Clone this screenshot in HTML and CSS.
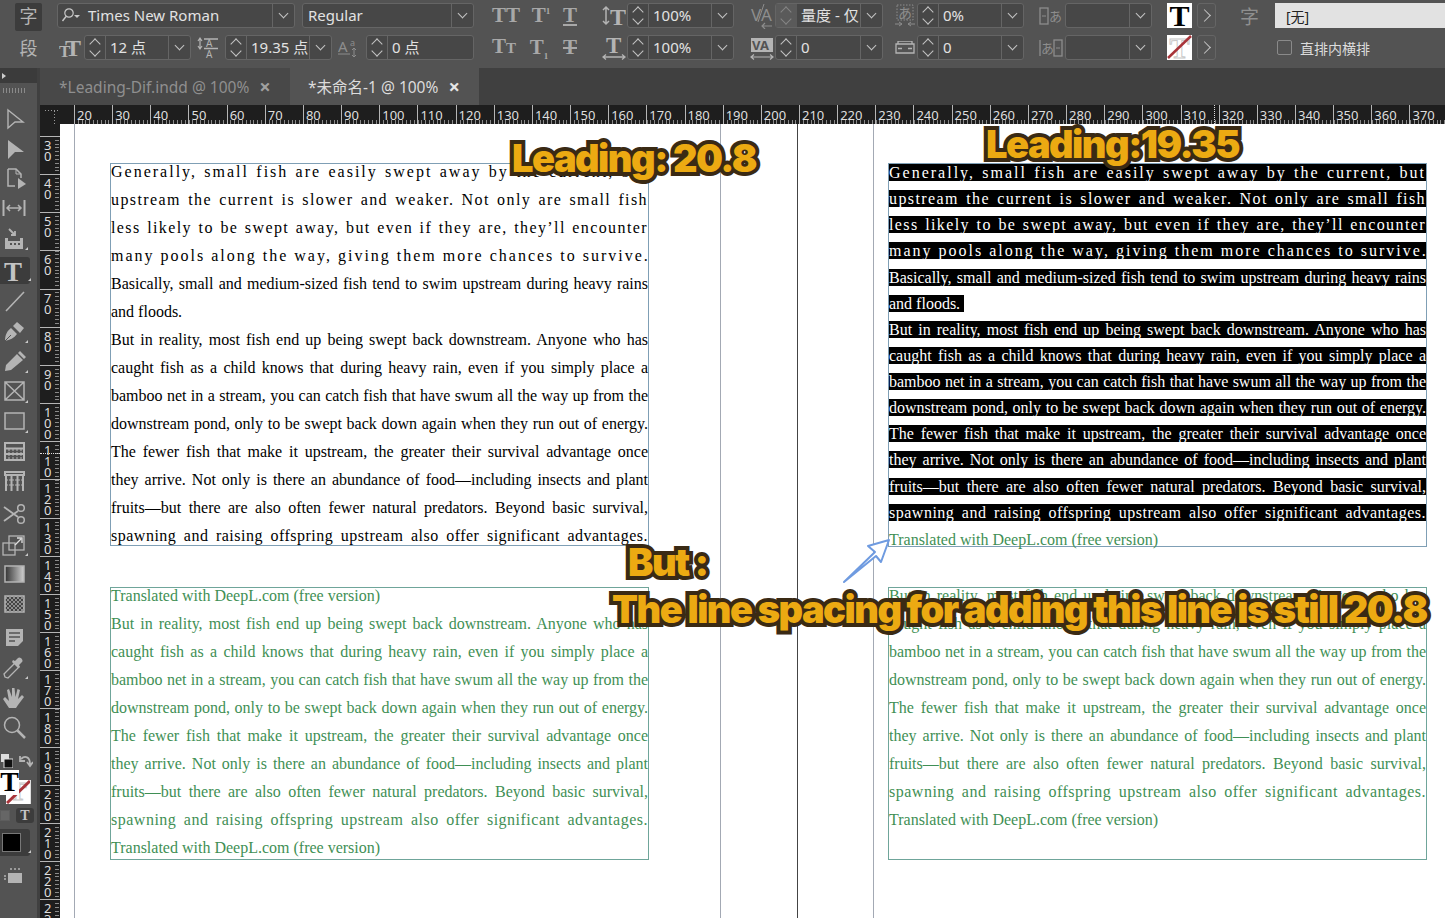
FILE: index.html
```html
<!DOCTYPE html>
<html lang="en">
<head>
  <meta charset="UTF-8" />
  <title>Leading test</title>
  <link rel="stylesheet" href="styles.css">
</head>
<body>
  <!-- Character control bar -->
  <div class="control-bar">
    <div class="col col-tabs">
      <div class="mode-tab active">字</div>
      <div class="mode-tab">段</div>
    </div>

    <div class="col col-font">
      <div class="row">
        <div class="field font-name">
          <svg class="search" width="22" height="16" viewBox="0 0 22 16"><circle cx="8" cy="6" r="4.2" fill="none" stroke="#c8c8c8" stroke-width="1.2"/><path d="M5 9.5L1.5 14" stroke="#c8c8c8" stroke-width="1.4"/><path d="M13 8h6l-3 3z" fill="#c8c8c8"/></svg>
          <span class="val">Times New Roman</span><span class="drop"></span>
        </div>
        <div class="field font-style"><span class="val">Regular</span><span class="drop"></span></div>
      </div>
      <div class="row">
        <div class="ctl-icon w27"><svg width="24" height="22" viewBox="0 0 24 22"><text x="0" y="20" class="ic-text" font-size="17">T</text><text x="6" y="19" class="ic-text" font-size="24">T</text></svg></div>
        <div class="field num"><span class="spin"></span><span class="val">12 点</span><span class="drop"></span></div>
        <div class="ctl-icon w34"><svg width="22" height="24" viewBox="0 0 22 24"><path d="M3 3v9M1 5l2-3 2 3M1 10l2 3 2-3" fill="none" stroke="#b4b4b4" stroke-width="1.2"/><path d="M7 3h14M7 12.500h14" stroke="#b4b4b4" stroke-width="1.5"/><text x="9" y="11" class="ic-text thin" font-size="10">A</text><text x="9" y="22" class="ic-text thin" font-size="10">A</text></svg></div>
        <div class="field num"><span class="spin"></span><span class="val clip">19.35 点</span><span class="drop"></span></div>
        <div class="ctl-icon w34 dim"><svg width="22" height="22" viewBox="0 0 22 22"><text x="0" y="15" class="ic-text thin" font-size="15">A</text><text x="12" y="9" class="ic-text thin" font-size="9">a</text><path d="M0 17h12" stroke="#8d8d8d"/><path d="M16 11v9M14 13l2-2 2 2M14 18l2 2 2-2" fill="none" stroke="#8d8d8d"/></svg></div>
        <div class="field num last"><span class="spin"></span><span class="val">0 点</span></div>
      </div>
    </div>

    <div class="col col-caps">
      <div class="row spread">
        <span class="glyph">TT</span><span class="glyph">T<sup>1</sup></span><span class="glyph under">T</span>
      </div>
      <div class="row spread">
        <span class="glyph">T<small>T</small></span><span class="glyph">T<sub>1</sub></span><span class="glyph strike">T</span>
      </div>
    </div>

    <div class="col col-scale">
      <div class="row">
        <div class="ctl-icon w26"><svg width="24" height="24" viewBox="0 0 24 24"><path d="M4 3v17M1 6l3-3 3 3M1 17l3 3 3-3" fill="none" stroke="#b4b4b4" stroke-width="1.5"/><text x="8" y="21" class="ic-text" font-size="24">T</text></svg></div>
        <div class="field num"><span class="spin"></span><span class="val">100%</span><span class="drop"></span></div>
      </div>
      <div class="row">
        <div class="ctl-icon w26"><svg width="24" height="24" viewBox="0 0 24 24"><text x="4" y="17" class="ic-text" font-size="23">T</text><path d="M1 21h22M4 18.500l-3 2.500 3 2.500M20 18.500l3 2.500-3 2.500" fill="none" stroke="#b4b4b4" stroke-width="1.3"/></svg></div>
        <div class="field num"><span class="spin"></span><span class="val">100%</span><span class="drop"></span></div>
      </div>
    </div>

    <div class="col col-kern">
      <div class="row">
        <div class="ctl-icon w26 dim"><svg width="24" height="26" viewBox="0 0 24 26"><text x="1" y="18" class="ic-text thin" font-size="17">V</text><text x="11" y="18" class="ic-text thin" font-size="17">A</text><path d="M14 1L8 19" stroke="#8d8d8d"/><path d="M22 23H12M15 20l-3 3 3 3" fill="none" stroke="#8d8d8d" stroke-width="1.2"/></svg></div>
        <div class="field num wide"><span class="spin off"></span><span class="val clip">量度 - 仅</span><span class="drop"></span></div>
      </div>
      <div class="row">
        <div class="ctl-icon w26"><svg width="24" height="24" viewBox="0 0 24 24"><rect x="1" y="2" width="22" height="14" fill="#b4b4b4"/><text x="2" y="14" class="vatext" font-size="13">VA</text><path d="M1 21h22M4 18.500l-3 2.500 3 2.500M20 18.500l3 2.500-3 2.500" fill="none" stroke="#b4b4b4" stroke-width="1.2"/></svg></div>
        <div class="field num wide"><span class="spin"></span><span class="val">0</span><span class="drop"></span></div>
      </div>
    </div>

    <div class="col col-tsume">
      <div class="row">
        <div class="ctl-icon w25 dim"><svg width="22" height="24" viewBox="0 0 22 24"><rect x="3" y="1" width="16" height="15" fill="none" stroke="#8d8d8d" stroke-dasharray="1.500 1.500"/><text x="4" y="14" class="ic-cjk" font-size="14">あ</text><path d="M1 20h7M5 18l3 2-3 2M21 20h-7M17 18l-3 2 3 2" fill="none" stroke="#8d8d8d"/></svg></div>
        <div class="field num"><span class="spin"></span><span class="val">0%</span><span class="drop"></span></div>
      </div>
      <div class="row">
        <div class="ctl-icon w25"><svg width="20" height="14" viewBox="0 0 20 14"><path d="M1 3h18v9H1zM3 3V0h14v3M3 7.500h4M13 7.500h4" fill="none" stroke="#b4b4b4" stroke-width="1.3"/></svg></div>
        <div class="field num"><span class="spin"></span><span class="val">0</span><span class="drop"></span></div>
      </div>
    </div>

    <div class="col col-aki">
      <div class="row">
        <div class="ctl-icon w28 dim"><svg width="24" height="20" viewBox="0 0 24 20"><rect x="1" y="2" width="8" height="16" fill="none" stroke="#8d8d8d" stroke-width="1.300"/><path d="M3 10h4" stroke="#8d8d8d"/><text x="10" y="15" class="ic-cjk" font-size="13">あ</text></svg></div>
        <div class="field blank"><span class="val"></span><span class="drop"></span></div>
      </div>
      <div class="row">
        <div class="ctl-icon w28 dim"><svg width="24" height="20" viewBox="0 0 24 20"><path d="M1 2v16" stroke="#8d8d8d" stroke-width="1.300"/><text x="2" y="15" class="ic-cjk" font-size="13">あ</text><rect x="15" y="2" width="8" height="16" fill="none" stroke="#8d8d8d" stroke-width="1.300"/><path d="M17 10h4" stroke="#8d8d8d"/></svg></div>
        <div class="field blank"><span class="val"></span><span class="drop"></span></div>
      </div>
    </div>

    <div class="col col-swatch">
      <div class="row">
        <div class="swatch fill-t">T</div>
        <div class="next"></div>
      </div>
      <div class="row">
        <div class="swatch none-t">T<svg class="slash" width="25" height="24" viewBox="0 0 25 24"><path d="M1 23L24 1" stroke="#a8343a" stroke-width="2.500"/></svg></div>
        <div class="next"></div>
      </div>
    </div>

    <div class="col col-style">
      <div class="row">
        <div class="ctl-icon style-mark">字</div>
        <div class="style-field">[无]</div>
      </div>
      <div class="row tate">
        <span class="check"></span><span>直排内横排</span>
      </div>
    </div>
  </div>

  <!-- Document tabs -->
  <div class="tab-bar">
    <div class="panel-head"><span class="panel-arrow"></span></div>
    <div class="doc-tab">*Leading-Dif.indd @ 100%<span class="close">×</span></div>
    <div class="doc-tab current">*未命名-1 @ 100%<span class="close">×</span></div>
  </div>

  <div class="workspace">
    <!-- Tools -->
    <div class="tools">
      <div class="tool"><svg width="24" height="26" viewBox="0 0 24 26"><path d="M6 5l15 12h-8l-7 6z" fill="none" stroke="#b4b4b4" stroke-width="1.4"/></svg></div>
      <div class="tool"><svg width="24" height="26" viewBox="0 0 24 26"><path d="M6 5l16 12h-9l-7 7z" fill="#b4b4b4"/></svg></div>
      <div class="tool"><svg width="24" height="26" viewBox="0 0 24 26"><path d="M6 4h8l5 5v4M6 4v17h7" fill="none" stroke="#b4b4b4" stroke-width="1.500"/><path d="M14 4v5h5" fill="none" stroke="#b4b4b4"/><path d="M16 13l8 6-8 5z" fill="#b4b4b4"/></svg></div>
      <div class="tool"><svg width="26" height="26" viewBox="0 0 26 26"><path d="M2.500 5v16M23.500 5v16" stroke="#b4b4b4" stroke-width="2"/><path d="M6 13h14M9 10l-3 3 3 3M17 10l3 3-3 3" fill="none" stroke="#b4b4b4" stroke-width="1.500"/></svg></div>
      <div class="tool more"><svg width="26" height="26" viewBox="0 0 26 26"><path d="M4 13v11h18V13h-3v3H7v-3z" fill="#b4b4b4"/><path d="M8 4l6 6M14 6v4h-4" fill="none" stroke="#b4b4b4" stroke-width="1.800"/><path d="M9 19h2M13 19h2M17 19h2" stroke="#535353" stroke-width="2"/></svg></div>
      <div class="tool gap active more"><svg width="26" height="26" viewBox="0 0 26 26"><text x="3" y="23" class="tool-t" font-size="27">T</text></svg></div>
      <div class="tool"><svg width="24" height="26" viewBox="0 0 24 26"><path d="M4 23L22 4" stroke="#b4b4b4" stroke-width="1.600"/></svg></div>
      <div class="tool more"><svg width="24" height="26" viewBox="0 0 24 26"><path d="M3 23c0-6 2-10 6-13l6 6c-3 4-7 6-12 7zM11 8l4-4 7 6-4 5z" fill="#b4b4b4"/><path d="M3 23l6-6" stroke="#535353"/></svg></div>
      <div class="tool more"><svg width="24" height="26" viewBox="0 0 24 26"><path d="M3 23l1-6L15 6l6 6L9 22zM16 5l2-2 6 6-2 2z" fill="#b4b4b4"/></svg></div>
      <div class="tool more"><svg width="26" height="26" viewBox="0 0 26 26"><path d="M4 4h19v18H4zM4 4l19 18M23 4L4 22" fill="none" stroke="#b4b4b4" stroke-width="1.500"/></svg></div>
      <div class="tool more"><svg width="26" height="26" viewBox="0 0 26 26"><rect x="4" y="5" width="19" height="16" fill="#5c5c5c" stroke="#b4b4b4" stroke-width="1.500"/></svg></div>
      <div class="tool"><svg width="26" height="26" viewBox="0 0 26 26"><path d="M4 5h19v17H4zM4 10.500h19M4 16h19" fill="none" stroke="#b4b4b4" stroke-width="2"/><path d="M8 11v5M12 11v5M16 11v5M20 11v5M8 16v5M12 16v5M16 16v5M20 16v5" stroke="#b4b4b4" stroke-dasharray="2 1"/></svg></div>
      <div class="tool"><svg width="26" height="26" viewBox="0 0 26 26"><path d="M4 4h19v3H4zM5 7v16M22 7v16M10.500 7v16M16.500 7v16" fill="none" stroke="#b4b4b4" stroke-width="2"/><path d="M5 12h17M5 17h17" stroke="#b4b4b4" stroke-dasharray="2 1"/></svg></div>
      <div class="tool gap"><svg width="26" height="26" viewBox="0 0 26 26"><circle cx="20" cy="7" r="3.300" fill="none" stroke="#b4b4b4" stroke-width="1.500"/><circle cx="20" cy="19" r="3.300" fill="none" stroke="#b4b4b4" stroke-width="1.500"/><path d="M3 6l14 10M3 20l14-10" stroke="#b4b4b4" stroke-width="1.800"/></svg></div>
      <div class="tool more"><svg width="26" height="26" viewBox="0 0 26 26"><rect x="2" y="12" width="12" height="12" fill="none" stroke="#b4b4b4" stroke-width="1.300"/><rect x="8" y="5" width="15" height="14" fill="none" stroke="#b4b4b4" stroke-width="1.300"/><path d="M14 14l6-6M16 7h5v5" fill="none" stroke="#e0e0e0" stroke-width="1.300"/></svg></div>
      <div class="tool"><svg width="26" height="26" viewBox="0 0 26 26"><defs><linearGradient id="grad"><stop offset="0" stop-color="#333"/><stop offset="1" stop-color="#d0d0d0"/></linearGradient></defs><rect x="4" y="5" width="19" height="16" fill="url(#grad)" stroke="#b4b4b4" stroke-width="1.500"/></svg></div>
      <div class="tool"><svg width="26" height="26" viewBox="0 0 26 26"><defs><pattern id="chk" width="4" height="4" patternUnits="userSpaceOnUse"><rect width="4" height="4" fill="#8f8f8f"/><rect width="2" height="2" fill="#444"/><rect x="2" y="2" width="2" height="2" fill="#444"/></pattern></defs><rect x="4" y="5" width="19" height="16" fill="url(#chk)" stroke="#b4b4b4" stroke-width="1.500"/></svg></div>
      <div class="tool gap"><svg width="26" height="26" viewBox="0 0 26 26"><path d="M5 5h17v12l-5 5H5z" fill="#b4b4b4"/><path d="M8 9h11M8 13h11M8 17h6" stroke="#535353" stroke-width="1.500"/></svg></div>
      <div class="tool more"><svg width="26" height="26" viewBox="0 0 26 26"><path d="M4 23l-1-3L14 9l4 4L7 24z" fill="none" stroke="#b4b4b4" stroke-width="1.300"/><path d="M14 7l3-3c2-2 6 2 4 4l-3 3 1 2-2 1-6-6 1-2z" fill="#b4b4b4"/></svg></div>
      <div class="tool"><svg width="26" height="26" viewBox="0 0 26 26"><path d="M8 24l-6-9 2-2 4 4-2-11 2-1 3 8V4h2.500l1 9 2-8 2.500 1-2 9 4-4 2 2-6 8-2 3z" fill="#b4b4b4"/></svg></div>
      <div class="tool"><svg width="26" height="26" viewBox="0 0 26 26"><circle cx="11" cy="11" r="7.500" fill="none" stroke="#b4b4b4" stroke-width="1.500"/><path d="M16.500 16.500L24 24" stroke="#b4b4b4" stroke-width="2.500"/></svg></div>

      <div class="swap-row">
        <svg width="12" height="14" viewBox="0 0 12 14"><rect x="0" y="0" width="8" height="8" fill="#ddd"/><rect x="3" y="5" width="9" height="9" fill="#111" stroke="#ddd"/></svg>
        <svg width="14" height="14" viewBox="0 0 14 14"><path d="M2 5c4-4 9-2 9 5M8 8l3 4 3-4M1 2v5h5" fill="none" stroke="#b4b4b4" stroke-width="1.800"/></svg>
      </div>
      <div class="fill-stroke">
        <div class="stroke-box">T<svg class="slash" width="25" height="24" viewBox="0 0 25 24"><path d="M1 23L24 1" stroke="#a8343a" stroke-width="3"/></svg></div>
        <div class="fill-box">T</div>
      </div>
      <div class="apply-row"><span class="apply-box"></span><span class="apply-t">T</span></div>
      <div class="screen-mode more"><span></span></div>
      <div class="preview"><svg width="22" height="20" viewBox="0 0 22 20"><rect x="5" y="7" width="14" height="10" fill="#b4b4b4"/><path d="M2 9v6M8 2v3M12 2v3M16 2v3" stroke="#b4b4b4" stroke-width="1.500" stroke-dasharray="2 1"/></svg></div>
    </div>

    <div class="rulers">
      <div class="ruler-h">
        <div class="corner"></div>
        <div class="ruler-track">
          <span>20</span><span>30</span><span>40</span><span>50</span><span>60</span><span>70</span>
          <span>80</span><span>90</span><span>100</span><span>110</span><span>120</span><span>130</span>
          <span>140</span><span>150</span><span>160</span><span>170</span><span>180</span><span>190</span>
          <span>200</span><span>210</span><span>220</span><span>230</span><span>240</span><span>250</span>
          <span>260</span><span>270</span><span>280</span><span>290</span><span>300</span><span>310</span>
          <span>320</span><span>330</span><span>340</span><span>350</span><span>360</span><span>370</span>
          <i class="cursor-x"></i>
        </div>
      </div>
      <div class="ruler-body">
        <div class="ruler-v">
          <span>3<br>0</span><span>4<br>0</span><span>5<br>0</span><span>6<br>0</span><span>7<br>0</span>
          <span>8<br>0</span><span>9<br>0</span><span>1<br>0<br>0</span><span>1<br>1<br>0</span><span>1<br>2<br>0</span>
          <span>1<br>3<br>0</span><span>1<br>4<br>0</span><span>1<br>5<br>0</span><span>1<br>6<br>0</span><span>1<br>7<br>0</span>
          <span>1<br>8<br>0</span><span>1<br>9<br>0</span><span>2<br>0<br>0</span><span>2<br>1<br>0</span><span>2<br>2<br>0</span>
          <span>2<br>3<br>0</span>
          <i class="cursor-y"></i>
        </div>

        <!-- Pasteboard: everything here sits on the page at its own place -->
        <div class="canvas">
          <i class="guide page-edge"></i>
          <i class="guide margin-a"></i>
          <i class="guide spine"></i>
          <i class="guide margin-b"></i>

          <div class="frame frame-tl">
            <div class="lines">
              <div class="tl ls-3">Generally, small fish are easily swept away by the current, but</div>
              <div class="tl ls-2">upstream the current is slower and weaker. Not only are small fish</div>
              <div class="tl ls-2">less likely to be swept away, but even if they are, they’ll encounter</div>
              <div class="tl ls-3">many pools along the way, giving them more chances to survive.</div>
              <div class="tl">Basically, small and medium-sized fish tend to swim upstream during heavy rains</div>
              <div class="tl end">and floods.</div>
              <div class="tl">But in reality, most fish end up being swept back downstream. Anyone who has</div>
              <div class="tl">caught fish as a child knows that during heavy rain, even if you simply place a</div>
              <div class="tl">bamboo net in a stream, you can catch fish that have swum all the way up from the</div>
              <div class="tl">downstream pond, only to be swept back down again when they run out of energy.</div>
              <div class="tl">The fewer fish that make it upstream, the greater their survival advantage once</div>
              <div class="tl">they arrive. Not only is there an abundance of food—including insects and plant</div>
              <div class="tl">fruits—but there are also often fewer natural predators. Beyond basic survival,</div>
              <div class="tl ls-1">spawning and raising offspring upstream also offer significant advantages.</div>
            </div>
          </div>

          <div class="frame frame-bl green">
            <div class="lines">
              <div class="tl end">Translated with DeepL.com (free version)</div>
              <div class="tl">But in reality, most fish end up being swept back downstream. Anyone who has</div>
              <div class="tl">caught fish as a child knows that during heavy rain, even if you simply place a</div>
              <div class="tl">bamboo net in a stream, you can catch fish that have swum all the way up from the</div>
              <div class="tl">downstream pond, only to be swept back down again when they run out of energy.</div>
              <div class="tl">The fewer fish that make it upstream, the greater their survival advantage once</div>
              <div class="tl">they arrive. Not only is there an abundance of food—including insects and plant</div>
              <div class="tl">fruits—but there are also often fewer natural predators. Beyond basic survival,</div>
              <div class="tl ls-1">spawning and raising offspring upstream also offer significant advantages.</div>
              <div class="tl end">Translated with DeepL.com (free version)</div>
            </div>
          </div>

          <div class="frame frame-tr">
            <div class="selected">
              <div class="tl ls-3">Generally, small fish are easily swept away by the current, but</div>
              <div class="tl ls-2">upstream the current is slower and weaker. Not only are small fish</div>
              <div class="tl ls-2">less likely to be swept away, but even if they are, they’ll encounter</div>
              <div class="tl ls-3">many pools along the way, giving them more chances to survive.</div>
              <div class="tl">Basically, small and medium-sized fish tend to swim upstream during heavy rains</div>
              <div class="tl end short">and floods. </div>
              <div class="tl">But in reality, most fish end up being swept back downstream. Anyone who has</div>
              <div class="tl">caught fish as a child knows that during heavy rain, even if you simply place a</div>
              <div class="tl">bamboo net in a stream, you can catch fish that have swum all the way up from the</div>
              <div class="tl">downstream pond, only to be swept back down again when they run out of energy.</div>
              <div class="tl">The fewer fish that make it upstream, the greater their survival advantage once</div>
              <div class="tl">they arrive. Not only is there an abundance of food—including insects and plant</div>
              <div class="tl">fruits—but there are also often fewer natural predators. Beyond basic survival,</div>
              <div class="tl ls-1">spawning and raising offspring upstream also offer significant advantages.</div>
            </div>
            <div class="tl end added">Translated with DeepL.com (free version)</div>
          </div>

          <div class="frame frame-br green">
            <div class="lines">
              <div class="tl">But in reality, most fish end up being swept back downstream. Anyone who has</div>
              <div class="tl">caught fish as a child knows that during heavy rain, even if you simply place a</div>
              <div class="tl">bamboo net in a stream, you can catch fish that have swum all the way up from the</div>
              <div class="tl">downstream pond, only to be swept back down again when they run out of energy.</div>
              <div class="tl">The fewer fish that make it upstream, the greater their survival advantage once</div>
              <div class="tl">they arrive. Not only is there an abundance of food—including insects and plant</div>
              <div class="tl">fruits—but there are also often fewer natural predators. Beyond basic survival,</div>
              <div class="tl ls-1">spawning and raising offspring upstream also offer significant advantages.</div>
              <div class="tl end">Translated with DeepL.com (free version)</div>
            </div>
          </div>

          <svg class="arrow" width="50" height="48" viewBox="0 0 50 48"><path d="M3 44L34 14L27 8L48 2L40 24L35 18Z" fill="#fff" stroke="#6f9be0" stroke-width="2" stroke-linejoin="round"/></svg>

          <div class="note note-a">Leading: 20.8</div>
          <div class="note note-b">Leading:19.35</div>
          <div class="note note-c">But :</div>
          <div class="note note-d">The line spacing for adding this line is still 20.8</div>
        </div>
      </div>
    </div>
  </div>
</body>
</html>
```

FILE: styles.css
```css
* {
  box-sizing: border-box;
}

html, body {
  margin: 0;
  height: 100%;
  overflow: hidden;
}

body {
  width: 1445px;
  height: 918px;
  background: #404040;
  font-family: "Noto Sans", "Noto Sans CJK SC", sans-serif;
  color: #dcdcdc;
  display: flex;
  flex-direction: column;
}

/* control bar */
.control-bar {
  display: flex;
  flex: none;
  height: 68px;
  padding-top: 3px;
  background: #535353;
}

.col {
  display: flex;
  flex-direction: column;
  flex: none;
  gap: 7px;
}

.row {
  display: flex;
  align-items: center;
  height: 25px;
}

.col-tabs { width: 27px; margin-left: 15px; }
.col-font { width: 417px; margin-left: 15px; }
.col-caps { width: 86px; margin-left: 18px; }
.col-scale { width: 133px; margin-left: 23px; }
.col-kern { width: 134px; margin-left: 15px; }
.col-tsume { width: 132px; margin-left: 9px; }
.col-aki { width: 115px; margin-left: 13px; }
.col-swatch { width: 49px; margin-left: 15px; }
.col-style { flex: 1; margin-left: 24px; }

.mode-tab {
  height: 28px;
  margin-bottom: -3px;
  text-align: center;
  font-size: 18px;
  line-height: 27px;
  color: #b4b4b4;
  border-radius: 2px;
}

.mode-tab.active {
  background: #3c3c3c;
}

.field {
  display: flex;
  align-items: stretch;
  flex: none;
  height: 25px;
  background: #474747;
  border: 1px solid #656565;
  border-radius: 3px;
  font-size: 15px;
  line-height: 23px;
  color: #e2e2e2;
}

.font-name { width: 238px; margin-right: 7px; }
.font-style { width: 172px; }
.num { width: 107px; }
.num.wide { width: 108px; }
.num.last { width: 108px; }
.blank { width: 87px; }

.search {
  flex: none;
  margin: 3px 0 0 3px;
}

.val {
  flex: 1;
  min-width: 0;
  padding-left: 4px;
  white-space: nowrap;
  overflow: hidden;
}

.font-name .val { padding-left: 5px; }
.font-style .val { padding-left: 5px; }

.drop {
  position: relative;
  flex: none;
  width: 22px;
  border-left: 1px solid #656565;
}

.drop::after {
  content: "";
  position: absolute;
  left: 7px;
  top: 6px;
  width: 6px;
  height: 6px;
  border-right: 1px solid #c4c4c4;
  border-bottom: 1px solid #c4c4c4;
  transform: rotate(45deg);
}

.spin {
  position: relative;
  flex: none;
  width: 21px;
  border-right: 1px solid #656565;
}

.spin.off {
  background: #5a5a5a;
  border-color: #5a5a5a;
}

.spin::before, .spin::after {
  content: "";
  position: absolute;
  left: 6px;
  width: 7px;
  height: 7px;
  border-right: 1px solid #c4c4c4;
  border-bottom: 1px solid #c4c4c4;
  transform: rotate(45deg);
}

.spin::before {
  top: 3px;
  transform: rotate(225deg);
  top: 4px;
}

.spin::after {
  top: 11px;
}

.spin.off::before, .spin.off::after {
  border-color: #858585;
}

.ctl-icon {
  display: flex;
  flex: none;
  justify-content: center;
  align-items: center;
  height: 25px;
}

.w25 { width: 25px; }
.w26 { width: 26px; }
.w27 { width: 27px; }
.w28 { width: 28px; }
.w34 { width: 34px; }

.ic-text {
  font-family: "Liberation Serif", serif;
  font-weight: 700;
  fill: #b4b4b4;
}

.ic-text.thin {
  font-family: "Noto Sans", sans-serif;
  font-weight: 400;
}

.dim .ic-text {
  fill: #8d8d8d;
}

.ic-cjk {
  font-family: "Noto Sans CJK JP", sans-serif;
  fill: #8d8d8d;
}

.vatext {
  font-family: "Noto Sans", sans-serif;
  font-weight: 700;
  fill: #535353;
}

.spread {
  justify-content: space-between;
}

.glyph {
  font-family: "Liberation Serif", serif;
  font-weight: 700;
  font-size: 21px;
  line-height: 25px;
  color: #a8a8a8;
  min-width: 16px;
  text-align: center;
}

.glyph sup, .glyph sub {
  font-size: 9px;
  line-height: 0;
}

.glyph small {
  font-size: 15px;
}

.glyph.under {
  text-decoration: underline;
  text-decoration-thickness: 1.5px;
  text-underline-offset: 2px;
}

.glyph.strike {
  text-decoration: line-through;
  text-decoration-thickness: 1.5px;
}

.swatch {
  position: relative;
  flex: none;
  width: 25px;
  height: 25px;
  margin-right: 5px;
  background: #fff;
  text-align: center;
  font-family: "Liberation Serif", serif;
  font-weight: 700;
  font-size: 30px;
  line-height: 25px;
}

.fill-t {
  color: #000;
  border-bottom: 1px solid #fff;
}

.none-t {
  color: #fff;
  -webkit-text-stroke: 1px #c9c9c9;
  overflow: hidden;
}

.slash {
  position: absolute;
  left: 0;
  top: 0;
}

.next {
  position: relative;
  flex: none;
  width: 19px;
  height: 25px;
  border: 1px solid #656565;
  border-radius: 3px;
}

.next::after {
  content: "";
  position: absolute;
  left: 2px;
  top: 7px;
  width: 8px;
  height: 8px;
  border-right: 1px solid #c4c4c4;
  border-top: 1px solid #c4c4c4;
  transform: rotate(45deg);
}

.style-mark {
  width: 35px;
  justify-content: flex-start;
  font-size: 19px;
  color: #8f8f8f;
}

.style-field {
  flex: 1;
  height: 25px;
  padding-left: 11px;
  background: #e2e2e2;
  color: #222;
  font-size: 14px;
  line-height: 27px;
}

.tate {
  padding-left: 37px;
  font-size: 14px;
  color: #dcdcdc;
}

.check {
  width: 15px;
  height: 15px;
  margin-right: 8px;
  border: 1px solid #8a8a8a;
  border-radius: 2px;
}

/* tabs */
.tab-bar {
  display: flex;
  flex: none;
  height: 37px;
  background: #404040;
}

.panel-head {
  position: relative;
  width: 40px;
  height: 37px;
  border-right: 3px solid #404040;
  background: linear-gradient(#3b3b3b 0 15px, #535353 15px);
}

.panel-arrow {
  position: absolute;
  left: 2px;
  top: 5px;
  border-left: 4px solid #ccc;
  border-top: 3px solid transparent;
  border-bottom: 3px solid transparent;
}

.panel-head::after {
  content: "";
  position: absolute;
  left: 3px;
  top: 20px;
  width: 22px;
  height: 5px;
  background: repeating-linear-gradient(90deg, #8a8a8a 0 1px, transparent 1px 3px);
}

.doc-tab {
  display: flex;
  align-items: center;
  width: 250px;
  padding-left: 19px;
  background: #484848;
  font-size: 15.500px;
  color: #8f8f8f;
  white-space: nowrap;
}

.doc-tab.current {
  width: 189px;
  padding-left: 18px;
  background: #535353;
  color: #dcdcdc;
}

.close {
  margin-left: 10px;
  font-size: 20px;
  font-weight: 700;
  line-height: 20px;
  color: #a0a0a0;
}

.current .close {
  color: #e6e6e6;
}

/* main area */
.workspace {
  display: flex;
  flex: 1;
  min-height: 0;
}

.tools {
  flex: none;
  width: 40px;
  padding-top: -2px;
  margin-top: -2px;
  background: #535353;
  border-right: 3px solid #404040;
  position: relative;
  z-index: 2;
}

.tool {
  position: relative;
  display: flex;
  justify-content: center;
  align-items: center;
  width: 27px;
  height: 30px;
}

.tool.gap {
  margin-top: 3px;
}

.tool.active {
  width: 30px;
  height: 27px;
  margin-top: 4px;
  margin-bottom: 2px;
  padding-right: 3px;
  background: #3c3c3c;
  border-radius: 0 3px 3px 0;
}

.tool-t {
  font-family: "Liberation Serif", serif;
  font-weight: 700;
  fill: #c4c4c4;
}

.more::after {
  content: "";
  position: absolute;
  right: -1px;
  bottom: 3px;
  border-right: 3px solid #c8c8c8;
  border-top: 3px solid transparent;
}

.swap-row {
  display: flex;
  align-items: center;
  gap: 6px;
  height: 16px;
  margin-top: 11px;
  padding-left: 1px;
}

.fill-stroke {
  position: relative;
  height: 44px;
  margin-top: 1px;
}

.fill-box, .stroke-box {
  position: absolute;
  text-align: center;
  font-family: "Liberation Serif", serif;
  font-weight: 700;
  line-height: 24px;
}

.fill-box {
  left: 0;
  top: 0;
  width: 19px;
  height: 25px;
  background: #fff;
  color: #000;
  font-size: 28px;
}

.stroke-box {
  left: 6px;
  top: 10px;
  width: 25px;
  height: 24px;
  background: #fff;
  border-right: 1px solid #ddd;
  color: #fff;
  -webkit-text-stroke: 1px #c9c9c9;
  font-size: 26px;
  overflow: hidden;
}

.apply-row {
  display: flex;
  align-items: center;
  gap: 6px;
  height: 15px;
  margin-top: -6px;
}

.apply-box {
  width: 10px;
  height: 11px;
  background: #666;
  border: 1px solid #5d5d5d;
}

.apply-t {
  width: 18px;
  height: 15px;
  background: #3c3c3c;
  border-radius: 3px;
  text-align: center;
  font-family: "Liberation Serif", serif;
  font-weight: 700;
  font-size: 14px;
  line-height: 15px;
  color: #c4c4c4;
}

.screen-mode {
  position: relative;
  width: 30px;
  height: 27px;
  margin-top: 6px;
  padding: 4px 0 0 2px;
  background: #3c3c3c;
  border-radius: 0 3px 3px 0;
}

.screen-mode span {
  display: block;
  width: 19px;
  height: 19px;
  background: #000;
  border: 1px solid #777;
}

.preview {
  display: flex;
  justify-content: center;
  width: 27px;
  margin-top: 10px;
}

/* rulers */
.rulers {
  display: flex;
  flex-direction: column;
  flex: 1;
  min-width: 0;
}

.ruler-h {
  display: flex;
  flex: none;
  height: 19px;
  background: #1e1e1e;
}

.corner {
  flex: none;
  width: 20px;
  background:
    repeating-linear-gradient(90deg, #9a9a9a 0 1px, transparent 1px 3px) 5px 5px / 14px 1px no-repeat,
    repeating-linear-gradient(0deg, #9a9a9a 0 1px, transparent 1px 3px) 14px 5px / 1px 14px no-repeat;
}

.ruler-track {
  position: relative;
  display: flex;
  flex: 1;
  padding-left: 14px;
  overflow: hidden;
  background: repeating-linear-gradient(90deg, #8a8a8a 0 1px, transparent 1px 3.817px) 14px 100% / 100% 4px no-repeat;
}

.ruler-track span {
  flex: none;
  width: 38.170px;
  padding-left: 2px;
  border-left: 1px solid #b5b5b5;
  font-size: 13px;
  line-height: 20px;
  color: #dedede;
}

.cursor-x {
  position: absolute;
  left: 1154px;
  top: 0;
  height: 19px;
  border-left: 1px dotted #ddd;
}

.ruler-body {
  display: flex;
  flex: 1;
  min-height: 0;
}

.ruler-v {
  position: relative;
  flex: none;
  width: 20px;
  padding-top: 12px;
  overflow: hidden;
  background: #1e1e1e repeating-linear-gradient(180deg, #8a8a8a 0 1px, transparent 1px 3.817px) 15px 12px / 4px 100% no-repeat;
}

.ruler-v span {
  display: block;
  height: 38.170px;
  padding: 3px 0 0 4px;
  border-top: 1px solid #b5b5b5;
  font-size: 13px;
  line-height: 11px;
  color: #dedede;
}

.cursor-y {
  position: absolute;
  left: 0;
  top: 329px;
  width: 20px;
  border-top: 1px dotted #ddd;
}

/* page */
.canvas {
  position: relative;
  flex: 1;
  min-width: 0;
  background: #fff;
  overflow: hidden;
}

.guide {
  position: absolute;
  top: 0;
  bottom: 0;
  border-left: 1px solid #a3a9b4;
}

.page-edge { left: 14px; }
.margin-a { left: 660px; }
.spine { left: 737px; border-color: #444; }
.margin-b { left: 813px; }

.frame {
  position: absolute;
  width: 539px;
  border: 1px solid #7f9fb5;
  font-family: "Liberation Serif", serif;
  font-size: 16px;
  color: #000;
}

.frame-tl { left: 50px; top: 39px; height: 383px; }
.frame-bl { left: 50px; top: 463px; height: 273px; }
.frame-tr { left: 828px; top: 39px; height: 384px; }
.frame-br { left: 828px; top: 463px; height: 273px; }

.green {
  color: #3f8f55;
  border-color: #6fa59a;
}

.lines {
  margin-top: -6px;
}

.tl {
  height: 28px;
  line-height: 28px;
  white-space: nowrap;
  text-align: justify;
  text-align-last: justify;
}

.tl.end {
  text-align-last: left;
}

.ls-1 { letter-spacing: 0.5px; }
.ls-2 { letter-spacing: 1.4px; }
.ls-3 { letter-spacing: 2px; }

.selected .tl {
  height: 17px;
  line-height: 17px;
  margin-bottom: 9.130px;
  background: #000;
  color: #fff;
}

.selected .tl.short {
  width: 75px;
}

.added {
  color: #3f8f55;
  margin-top: -2px;
  line-height: 24px;
  height: 24px;
}

.arrow {
  position: absolute;
  left: 781px;
  top: 414px;
}

.note {
  position: absolute;
  font-family: "Inter", "Open Sans", sans-serif;
  font-weight: 900;
  font-size: 38px;
  line-height: 44px;
  letter-spacing: -1.500px;
  white-space: nowrap;
  color: #ecaa12;
  -webkit-text-stroke: 8px #3a2a14;
  paint-order: stroke fill;
  stroke-linejoin: round;
}

.note-a { left: 452px; top: 12px; }
.note-b { left: 926px; top: -2px; }
.note-c { left: 568px; top: 416px; }
.note-d { left: 552px; top: 463px; }
```
